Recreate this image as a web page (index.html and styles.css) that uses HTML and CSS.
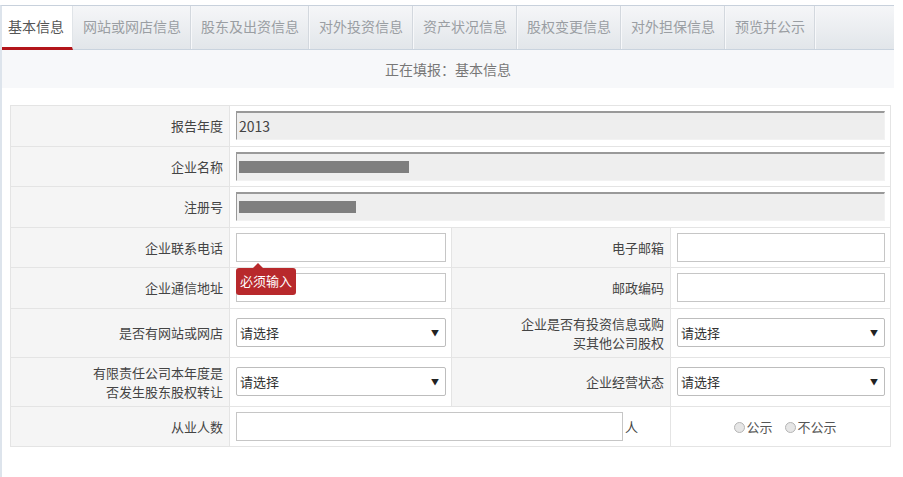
FILE: index.html
```html
<!DOCTYPE html>
<html lang="zh-CN">
<head>
<meta charset="utf-8">
<title>基本信息</title>
<link rel="stylesheet" href="styles.css">
</head>
<body>
<div class="page">
  <div class="tabs">
    <div class="tab active">基本信息</div>
    <div class="tab">网站或网店信息</div>
    <div class="tab">股东及出资信息</div>
    <div class="tab">对外投资信息</div>
    <div class="tab">资产状况信息</div>
    <div class="tab">股权变更信息</div>
    <div class="tab">对外担保信息</div>
    <div class="tab">预览并公示</div>
  </div>
  <div class="subtitle">正在填报：基本信息</div>
  <table class="form">
    <colgroup><col class="c1"><col class="c2"><col class="c3"><col class="c4"></colgroup>
    <tr>
      <th>报告年度</th>
      <td colspan="3"><div class="ro">2013</div></td>
    </tr>
    <tr>
      <th>企业名称</th>
      <td colspan="3"><div class="ro"><span class="redact w1"></span></div></td>
    </tr>
    <tr>
      <th>注册号</th>
      <td colspan="3"><div class="ro"><span class="redact w2"></span></div></td>
    </tr>
    <tr>
      <th>企业联系电话</th>
      <td><div class="inp"></div></td>
      <th>电子邮箱</th>
      <td><div class="inp"></div></td>
    </tr>
    <tr>
      <th>企业通信地址</th>
      <td class="rel"><div class="inp"></div><div class="tip">必须输入</div></td>
      <th>邮政编码</th>
      <td><div class="inp"></div></td>
    </tr>
    <tr class="tall">
      <th>是否有网站或网店</th>
      <td><div class="sel"><span>请选择</span><span class="arr">▼</span></div></td>
      <th>企业是否有投资信息或购<br>买其他公司股权</th>
      <td><div class="sel"><span>请选择</span><span class="arr">▼</span></div></td>
    </tr>
    <tr class="tall">
      <th>有限责任公司本年度是<br>否发生股东股权转让</th>
      <td><div class="sel"><span>请选择</span><span class="arr">▼</span></div></td>
      <th>企业经营状态</th>
      <td><div class="sel"><span>请选择</span><span class="arr">▼</span></div></td>
    </tr>
    <tr>
      <th>从业人数</th>
      <td colspan="2"><div class="people"><div class="inp wide"></div><span class="unit">人</span></div></td>
      <td class="radios"><span class="radio"></span>公示<span class="radio second"></span>不公示</td>
    </tr>
  </table>
</div>
</body>
</html>
```
FILE: styles.css
```css
html, body {
  margin: 0;
  padding: 0;
  background: #fff;
}
body {
  font-family: "Noto Sans CJK SC", "Liberation Sans", sans-serif;
  color: #444;
}
.page {
  margin-top: 5px;
  width: 892px;
  min-height: 471px;
  border-top: 1px solid #c8d1dc;
  border-left: 2px solid #dde4ec;
}
.tabs {
  display: flex;
  height: 43px;
  border-bottom: 1px solid #c9d3de;
  background: linear-gradient(#f5f6f8, #e2e6ea);
}
.tab {
  padding: 0 9px 0 10px;
  line-height: 40px;
  font-size: 14px;
  color: #9a9ea3;
  border-right: 1px solid #d3d8de;
  box-shadow: 1px 0 0 #f7f8fa;
  white-space: nowrap;
}
.tab.active {
  padding: 0 8px 0 6px;
  background: #fff;
  color: #555;
  border-bottom: 3px solid #b3161b;
  margin-bottom: -1px;
  box-shadow: none;
  border-right-color: #e0e4e8;
}
.subtitle {
  height: 38px;
  line-height: 38px;
  background: #f7f8fa;
  text-align: center;
  font-size: 14px;
  color: #777;
}
.form {
  margin: 17px 0 0 8px;
  width: 881px;
  border-collapse: collapse;
  table-layout: fixed;
  border: 1px solid #dcdcdc;
  font-size: 13px;
}
.c1 { width: 219px; }
.c2 { width: 222px; }
.c3 { width: 219px; }
.c4 { width: 220px; }
.form th, .form td {
  border: 1px solid #e4e4e4;
  height: 29.5px;
  padding: 5px 5px 5px 6px;
  vertical-align: middle;
}
.form th {
  background: #f5f5f5;
  font-weight: normal;
  text-align: right;
  color: #444;
  padding-right: 6px;
  line-height: 19px;
}
.form tr.tall th, .form tr.tall td {
  height: 35px;
}
.ro {
  box-sizing: border-box;
  height: 29px;
  background: #eee;
  border-top: 2px solid #999;
  border-left: 1px solid #999;
  border-right: 1px solid #f2f2f2;
  border-bottom: 1px solid #f2f2f2;
  padding-left: 2px;
  display: flex;
  align-items: center;
  font-size: 14px;
  color: #444;
}
.redact {
  display: inline-block;
  height: 12px;
  background: #7f7f7f;
}
.redact.w1 { width: 170px; }
.redact.w2 { width: 117px; }
.inp {
  box-sizing: border-box;
  height: 29px;
  border: 1px solid #c6c6c6;
  background: #fff;
}
.rel { position: relative; }
.tip {
  position: absolute;
  left: 6px;
  top: 0;
  height: 27px;
  line-height: 26px;
  padding: 0 4px 0 4px;
  background: #b8292c;
  color: #fff;
  font-size: 13px;
  border-radius: 3px;
}
.tip::before {
  content: "";
  position: absolute;
  left: 17px;
  top: -5px;
  border-left: 5px solid transparent;
  border-right: 5px solid transparent;
  border-bottom: 5px solid #b8292c;
}
.sel {
  box-sizing: border-box;
  height: 29px;
  border: 1px solid #bdbdbd;
  border-radius: 2px;
  background: #fff;
  display: flex;
  align-items: center;
  justify-content: space-between;
  padding: 0 6px 0 3px;
  font-size: 13px;
  color: #333;
}
.arr {
  font-size: 8px;
  color: #222;
}
.people {
  display: flex;
  align-items: center;
}
.inp.wide {
  width: 387px;
}
.unit {
  margin-left: 2px;
  font-size: 13px;
  color: #444;
}
.form td.radios {
  text-align: center;
  font-size: 13px;
  color: #555;
  padding-left: 14px;
}
.radio {
  display: inline-block;
  width: 9px;
  height: 9px;
  border-radius: 50%;
  border: 1px solid #b5b5b5;
  background: #e6e6e6;
  vertical-align: -1px;
  margin-right: 2px;
}
.radio.second {
  margin-left: 12px;
}
```
